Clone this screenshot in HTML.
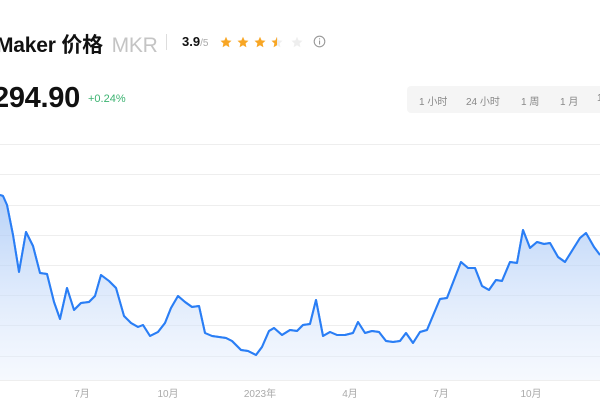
<!DOCTYPE html>
<html><head><meta charset="utf-8"><style>
*{margin:0;padding:0;box-sizing:border-box}
body{width:600px;height:420px;overflow:hidden;background:#fff;font-family:"Liberation Sans","Noto Sans CJK SC",sans-serif;position:relative;color:#111}
.a{position:absolute;white-space:nowrap}
</style></head><body>
<div class="a" style="left:-4px;top:29px;font-size:21px;font-weight:bold;letter-spacing:-0.2px">Maker 价格 <span style="font-weight:normal;color:#c4c4c4;font-size:21px;margin-left:3px">MKR</span></div>
<div class="a" style="left:166px;top:34px;width:1px;height:16px;background:#ddd"></div>
<div class="a" style="left:182px;top:34px;font-size:13px;font-weight:bold">3.9<span style="font-weight:normal;color:#aaa;font-size:10px">/5</span></div>
<svg class="a" style="left:218px;top:34px" width="92" height="16" viewBox="0 0 92 16">
<defs><path id="s" d="M6 0.8l1.6 3.6 3.9.4-2.9 2.6.8 3.8L6 9.3 2.6 11.2l.8-3.8L.5 4.8l3.9-.4z"/>
<clipPath id="h"><rect x="0" y="0" width="6" height="14"/></clipPath></defs>
<use href="#s" x="2" y="2" fill="#f8a624"/><use href="#s" x="19" y="2" fill="#f8a624"/><use href="#s" x="36" y="2" fill="#f8a624"/>
<use href="#s" x="53" y="2" fill="#eee"/><g clip-path="url(#h)" transform="translate(53,2)"><use href="#s" fill="#f8a624"/></g>
<use href="#s" x="73" y="2" fill="#eee"/></svg>
<svg class="a" style="left:313px;top:35px" width="13" height="13" viewBox="0 0 13 13"><circle cx="6.5" cy="6.5" r="5.3" fill="none" stroke="#999" stroke-width="1.1"/><rect x="6" y="5.5" width="1.1" height="4" fill="#999"/><rect x="6" y="3.3" width="1.1" height="1.1" fill="#999"/></svg>
<div class="a" style="left:-7px;top:82px;font-size:29px;font-weight:bold;letter-spacing:-0.3px">294.90</div>
<div class="a" style="left:88px;top:93px;font-size:11px;color:#3cb371">+0.24%</div>
<div class="a" style="left:407px;top:86px;width:200px;height:27px;background:#f5f5f5;border-radius:4px"></div>
<div class="a" style="left:419px;top:93px;font-size:10px;color:#888">1 小时</div>
<div class="a" style="left:466px;top:93px;font-size:10px;color:#888">24 小时</div>
<div class="a" style="left:521px;top:93px;font-size:10px;color:#888">1 周</div>
<div class="a" style="left:560px;top:93px;font-size:10px;color:#888">1 月</div>
<div class="a" style="left:597px;top:93px;font-size:10px;color:#888">1</div>
<svg class="a" style="left:0;top:0" width="600" height="420">
<defs><linearGradient id="g" x1="0" y1="0" x2="0" y2="1"><stop offset="0" stop-color="#9fc2f5" stop-opacity=".75"/><stop offset="1" stop-color="#e8f0fd" stop-opacity=".4"/></linearGradient></defs>
<g stroke="#eee" stroke-width="1">
<line x1="0" y1="144.5" x2="600" y2="144.5"/><line x1="0" y1="174.5" x2="600" y2="174.5"/><line x1="0" y1="205.5" x2="600" y2="205.5"/><line x1="0" y1="235.5" x2="600" y2="235.5"/><line x1="0" y1="265.5" x2="600" y2="265.5"/><line x1="0" y1="295.5" x2="600" y2="295.5"/><line x1="0" y1="325.5" x2="600" y2="325.5"/><line x1="0" y1="356.5" x2="600" y2="356.5"/><line x1="0" y1="380.5" x2="600" y2="380.5"/></g>
<path id="ln" d="M0 195L3 196L7 205L13 235L19 272L26 232L33 246L40 273L47 274L54 302L60 319L67 288L74 310L81 303L89 302L95 296L101 275L109 281L116 288L124 316L131 323L138 327L143 325L150 336L158 332L165 323L171 308L178 296L185 302L192 307L199 306L205 333L212 336L226 338L232 341L241 350L248 351L256 355L262 347L269 331L274 328L282 335L290 330L297 331L303 325L310 324L316 300L323 336L330 332L337 335L345 335L353 333L358 322L365 333L372 331L379 332L386 341L393 342L400 341L406 333L413 343L420 332L427 330L440 299L447 298L461 262L468 268L475 268L482 286L489 290L496 280L502 281L510 262L517 263L523 230L530 248L537 242L544 244L550 243L558 257L565 262L580 238L586 233L594 247L600 255" fill="none" stroke="#2a7ef5" stroke-width="2" stroke-linejoin="round"/>
<path d="M0 195L3 196L7 205L13 235L19 272L26 232L33 246L40 273L47 274L54 302L60 319L67 288L74 310L81 303L89 302L95 296L101 275L109 281L116 288L124 316L131 323L138 327L143 325L150 336L158 332L165 323L171 308L178 296L185 302L192 307L199 306L205 333L212 336L226 338L232 341L241 350L248 351L256 355L262 347L269 331L274 328L282 335L290 330L297 331L303 325L310 324L316 300L323 336L330 332L337 335L345 335L353 333L358 322L365 333L372 331L379 332L386 341L393 342L400 341L406 333L413 343L420 332L427 330L440 299L447 298L461 262L468 268L475 268L482 286L489 290L496 280L502 281L510 262L517 263L523 230L530 248L537 242L544 244L550 243L558 257L565 262L580 238L586 233L594 247L600 255L600 380L0 380Z" fill="url(#g)"/>
<use href="#ln"/>
<g font-size="10" fill="#aaa" text-anchor="middle" font-family="Liberation Sans,Noto Sans CJK SC,sans-serif">
<text x="82" y="397">7月</text><text x="168" y="397">10月</text><text x="260" y="397">2023年</text><text x="350" y="397">4月</text><text x="441" y="397">7月</text><text x="531" y="397">10月</text></g>
</svg>
</body></html>
